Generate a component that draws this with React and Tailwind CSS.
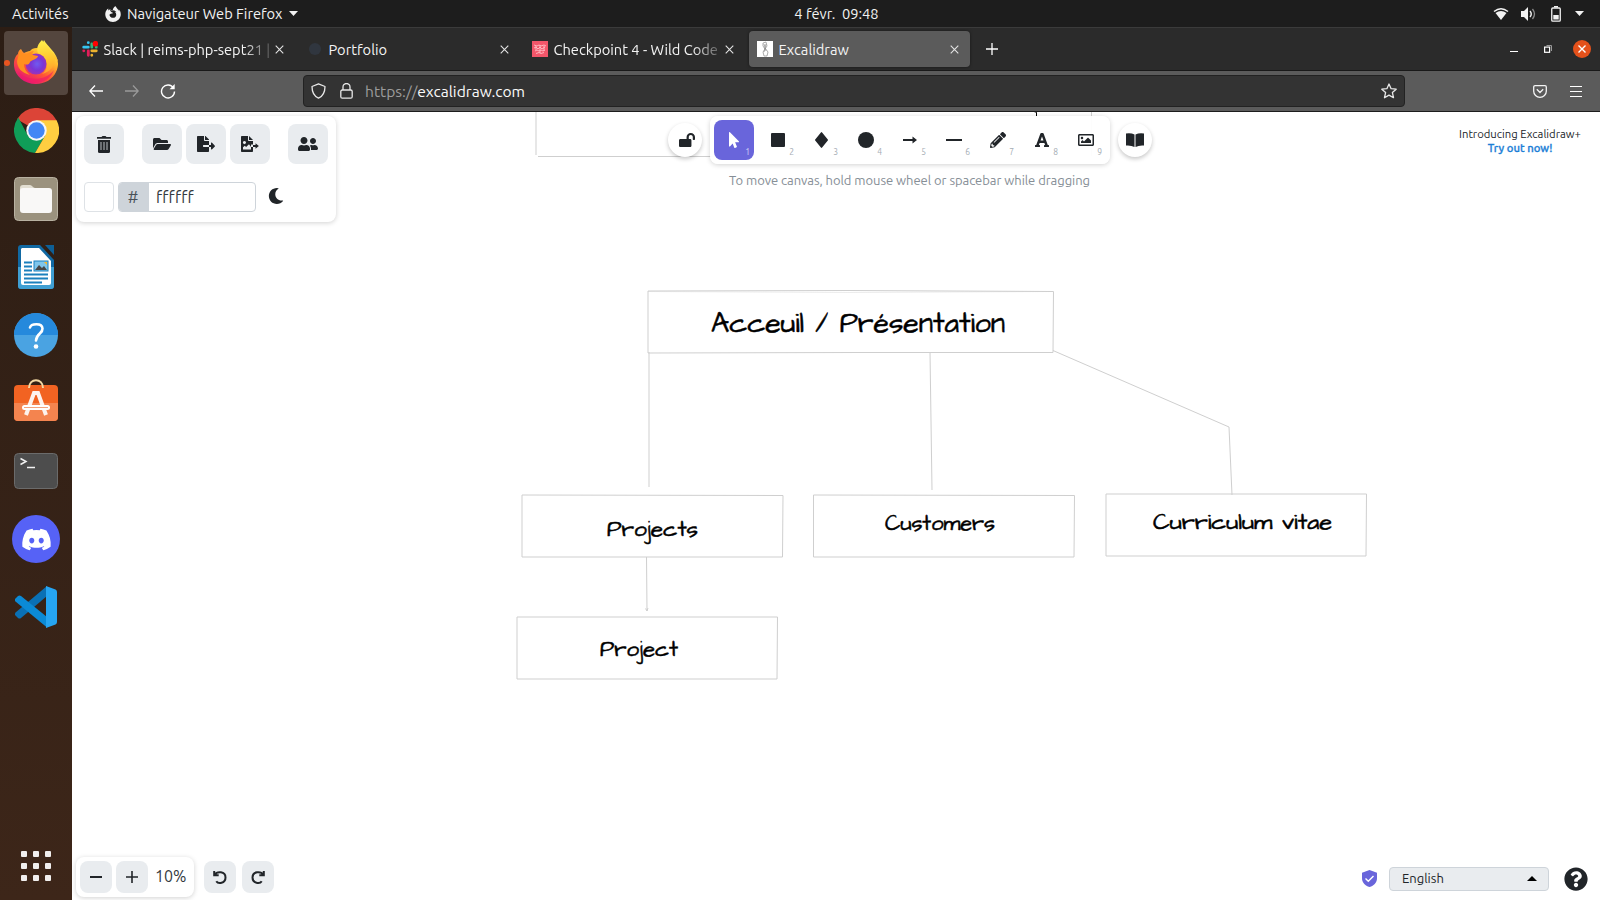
import React from "react";
import { FaFolderOpen, FaFileExport, FaMoon, FaLockOpen, FaMousePointer, FaPencilAlt, FaFont, FaUserFriends, FaDiscord, FaQuestionCircle, FaRegImage } from "react-icons/fa";
import { SiFirefoxbrowser } from "react-icons/si";

const Close = () => (
  <svg className="size-[9px]" viewBox="0 0 9 9" stroke="#e4e4e4" strokeWidth="1.1"><path d="M.7.7l7.6 7.6M8.3.7L.7 8.3" /></svg>
);

const Tab = ({ icon, title, active, fade }) => (
  <div className={`flex h-9 w-[221px] items-center rounded pl-2 pr-[11px] ${active ? "bg-[#5b5b5b] shadow-[0_0_3px_rgba(0,0,0,.5)]" : ""}`}>
    <div className="flex size-4 shrink-0 items-center justify-center">{icon}</div>
    <div className={`ml-[5.500px] h-6 min-w-0 flex-1 whitespace-nowrap text-[14.67px] leading-[25px] text-[#f4f4f4] ${fade ? "[mask-image:linear-gradient(to_right,black_82%,transparent_103%)]" : ""}`}>
      {title}
    </div>
    <div className="ml-0.5"><Close /></div>
  </div>
);

const SlackIcon = () => (
  <svg className="size-4" viewBox="0 0 16 16" strokeWidth="2.8" strokeLinecap="round">
    <path d="M6.3 1.6v.1M1.7 6.2h4.6" stroke="#36c5f0" /><path d="M9.8 3v3.2M14.2 6.2h.1" stroke="#2eb67d" />
    <path d="M9.8 14.2v.1M9.8 9.8h4.5" stroke="#ecb22e" /><path d="M6.3 9.8v4.5M1.7 9.8h.1" stroke="#e01e5a" />
    <circle cx="13.4" cy="2.7" r="2.8" fill="#f00" />
  </svg>
);
const WildIcon = () => (
  <svg className="size-4" viewBox="0 0 16 16"><rect width="16" height="16" fill="#f2566a" />
    <path d="M2 4l3 1 2-1 2 1 3-1 2 1M2 7l2-1 2 2 2-2 2 2 3-2M3 10l2-1 2 1 2-1 2 1 2-1M4 12.500l3-1 2 1 3-1M4 5v4M8 4v8M12 5v5" stroke="#ffc0c6" strokeWidth=".9" fill="none" /></svg>
);
const ExcaliIcon = () => (
  <svg className="size-4" viewBox="0 0 16 16"><rect width="16" height="16" fill="#fff" />
    <path d="M6 2l3-1 1 4-2 3-2-3zM8 8L6 11l1 4 3 0 1-4-3-4M7 3l2 7M9 3l-2 8" stroke="#8a8a8a" strokeWidth=".7" fill="none" /></svg>
);

const FirefoxLogo = () => (
  <svg className="h-[48px] w-[46px]" viewBox="0 0 46 48">
    <defs>
      <linearGradient id="ffA" x1=".85" y1=".1" x2=".3" y2="1"><stop offset="0" stopColor="#fff44f" /><stop offset=".35" stopColor="#ffb42b" /><stop offset=".65" stopColor="#ff5634" /><stop offset="1" stopColor="#e3127a" /></linearGradient>
      <linearGradient id="ffB" x1=".5" y1="0" x2=".6" y2="1"><stop offset="0" stopColor="#fff04a" /><stop offset=".6" stopColor="#ffc22e" /><stop offset="1" stopColor="#ff9a2e" /></linearGradient>
      <radialGradient id="ffC" cx=".55" cy=".5"><stop offset="0" stopColor="#6f5bf0" /><stop offset=".6" stopColor="#7a35d6" /><stop offset="1" stopColor="#9b32b8" /></radialGradient>
    </defs>
    <path d="M8 10c1 2 2 3 3 4 2-1 4-2 6-2 2-3 7-4 10-2l4-9c2 4 4 5 7 9 7 7 9 15 5 23-3 7-11 12-20 12C11 45 2 37 1 27c-.4-5 1-10 4-12 0-2 1-4 3-5z" fill="url(#ffA)" />
    <path d="M29 1c-4 4-6 8-4 13 5 2 9 7 9 12 0 4-2 7-5 9 8-2 13-8 13-15l3 2C43 15 35 11 29 1z" fill="url(#ffB)" />
    <circle cx="23" cy="25" r="10.500" fill="url(#ffC)" />
    <path d="M7 11c1 2 3 4 5 4 3 0 5-3 9-3-2 2-2 3-1 4l5 1c0 3-7 4-8 6-1 3-3 3-6 2 0 4 2 8 6 11C9 34 4 29 4 22z" fill="#ff8f1f" />
    <path d="M5 32c6 9 26 12 36-1-3 8-10 13-19 13C14 44 7 39 5 32z" fill="#f01a68" opacity=".65" />
  </svg>
);
const ChromeLogo = () => (
  <svg className="-mt-px size-[45px]" viewBox="-22.500 -22.500 45 45">
    <path d="M0 0L-19.500-11.250A22.500 22.500 0 0 1 20.200-10z" fill="#dc4437" />
    <path d="M0-10H20.200L8.700 5z" fill="#ffce41" />
    <path d="M-8.700 5l-9.500-18A22.500 22.500 0 0 0-1.500 22.450L8.700 5z" fill="#109d58" />
    <path d="M8.700 5L-1.500 22.450A22.500 22.500 0 0 0 20.200-10H0z" fill="#ffce41" />
    <circle r="10.200" fill="#f5f5f5" /><circle r="8.200" fill="#4286f5" />
  </svg>
);
const FilesLogo = () => (
  <svg className="size-[46px]" viewBox="0 0 46 46"><rect x="1.500" y="1.500" width="43" height="43" rx="4" fill="#9b927e" stroke="#b8b1a1" />
    <path d="M7 12a3 3 0 0 1 3-3h7c2 0 3 3 5 3h14v10H7z" fill="#e2ded2" /><rect x="7" y="12" width="32" height="25" rx="3" fill="#f9f8f7" /></svg>
);
const WriterLogo = () => (
  <svg className="h-[46px] w-[38px]" viewBox="0 0 38 46">
    <path d="M4 1h19l14 15v26a3 3 0 0 1-3 3H4a3 3 0 0 1-3-3V4a3 3 0 0 1 3-3z" fill="#1169a3" /><path d="M1 23h36v19a3 3 0 0 1-3 3H4a3 3 0 0 1-3-3z" fill="#3f9fd3" />
    <path d="M5 4h17l12 13v22a2 2 0 0 1-2 2H6a2 2 0 0 1-2-2V5z" fill="#fff" /><path d="M28 1h9v10z" fill="#0e5f96" />
    <path d="M7 18.500h8M7 22.500h8M7 26.500h8M7 30.500h24M7 34.500h24M7 38.500h18" stroke="#1b80bd" strokeWidth="2" />
    <rect x="17" y="17" width="14" height="10" fill="#7fc6ec" stroke="#1b80bd" /><path d="M18 26l4-5 3 3 2-2 3 4z" fill="#474747" /><path d="M27 18h3v3z" fill="#fbb829" />
  </svg>
);
const HelpLogo = () => (
  <svg className="size-[46px]" viewBox="0 0 46 46"><circle cx="23" cy="23" r="22" fill="#4aa3e2" /><path d="M1 23a22 22 0 0 1 44 0z" fill="#2589dc" />
    <path d="M17 15.500c1-4 12-5 12.500 1 .4 5-6 5-6.500 12" fill="none" stroke="#fff" strokeWidth="2.600" strokeLinecap="round" /><circle cx="23" cy="34.500" r="2.300" fill="#fff" /></svg>
);
const SoftwareLogo = () => (
  <svg className="size-[48px]" viewBox="0 0 48 48">
    <rect x="2" y="6" width="44" height="36" rx="4" fill="#f26322" /><path d="M2 24h44v14a4 4 0 0 1-4 4H6a4 4 0 0 1-4-4z" fill="#f4844f" />
    <path d="M17 9c0-10.500 14-10.500 14 0" fill="none" stroke="#f3d9a4" strokeWidth="2" />
    <path d="M14 36l8-22h4l8 22" fill="none" stroke="#fdf3ee" strokeWidth="4" /><rect x="10" y="26" width="28" height="5" rx="2.500" fill="#fff" /><path d="M12 28.500h24" stroke="#f4a27c" /></svg>
);
const TerminalLogo = () => (
  <svg className="h-9 w-11" viewBox="0 0 44 36"><rect x=".5" y=".5" width="43" height="35" rx="4" fill="#4d4d4d" stroke="#6b6b6b" />
    <path d="M6.500 5.500l5.500 3-5.500 3M13 14.500h8" fill="none" stroke="#f2f2f2" strokeWidth="1.500" /></svg>
);
const CodeLogo = () => (
  <svg className="size-[42px]" viewBox="0 0 42 42"><path d="M0 29l3 3q1.500 1 3 0L32 10V0L.5 26.500Q-.5 27.700 0 29z" fill="#0a70b5" />
    <path d="M0 13l3-3q1.500-1 3 0L32 31v10.500L.5 15.500Q-.5 14.300 0 13z" fill="#0b8ad6" /><path d="M31 0l9.500 3.500Q42 4.200 42 6v30q0 1.800-1.500 2.500L31 42z" fill="#26a5f2" /></svg>
);

const Dock = () => (
  <aside className="flex w-[72px] shrink-0 flex-col items-center bg-gradient-to-b from-[#2c1d14] to-[#3d2619] pt-1">
    <div className="flex flex-col gap-1">
      {[FirefoxLogo, ChromeLogo, FilesLogo, WriterLogo, HelpLogo, SoftwareLogo, TerminalLogo].map((Logo, i) => (
        <div key={i} className={`relative flex size-16 items-center justify-center rounded ${i === 0 ? "bg-[#54463e]" : ""}`}>
          {i === 0 && <span className="absolute left-0 top-[29px] size-1.5 rounded-full bg-[#e95420]" />}
          <Logo />
        </div>
      ))}
      <div className="flex size-16 items-center justify-center"><div className="flex size-12 items-center justify-center rounded-full bg-[#5662f6] text-[31px] text-white"><FaDiscord /></div></div>
      <div className="flex size-16 items-center justify-center"><CodeLogo /></div>
    </div>
    <div className="mt-auto mb-[19px] grid grid-cols-3 gap-1.5">
      {Array.from({ length: 9 }, (_, i) => <span key={i} className="size-1.5 rounded-[1px] bg-[#f1efee]" />)}
    </div>
  </aside>
);

const Btn = ({ children, className = "" }) => (
  <button className={`flex size-10 items-center justify-center rounded-lg bg-[#e9ecef] text-[#212529] ${className}`}>{children}</button>
);

const Trash = () => (
  <svg className="h-[17px] w-[14px]" viewBox="0 0 14 17"><path d="M0 1h4.500L5.500 0h3l1 1H14v1.800H0z" fill="#212529" /><path d="M1 4h12v11.500a1.500 1.500 0 0 1-1.500 1.500h-9A1.500 1.500 0 0 1 1 15.500z" fill="#212529" /><path d="M4 6v8M7 6v8M10 6v8" stroke="#8d9296" strokeWidth="1.400" /></svg>
);
const ImageExport = () => (
  <svg className="h-4 w-[18px]" viewBox="0 0 576 512"><path fill="#212529" fillRule="evenodd" d="M24 0h200v136c0 13 11 24 24 24h136v112H320v80h64v136c0 13-11 24-24 24H24c-13 0-24-11-24-24V24C0 11 11 0 24 0zM110 160a50 50 0 1 0 .1 0zM64 432h256v-80l-64-90-92 92-44-42-56 50zM256 0l128 128H256z" /><path fill="#212529" d="M384 288h80v-56l108 88-108 88v-56h-80z" /></svg>
);

const Tools = () => {
  const tools = [
    <FaMousePointer className="size-4" />,
    <svg className="size-[14px]" viewBox="0 0 14 14"><rect width="14" height="14" rx="1" fill="#212529" /></svg>,
    <svg className="h-4 w-3.5" viewBox="0 0 14 16"><path d="M5.900.5q.6-.8 1.200 0L12.800 7.400q.4.6 0 1.200L7.100 15.500q-.6.8-1.200 0L.2 8.600q-.4-.6 0-1.200z" fill="#212529" /></svg>,
    <span className="size-4 rounded-full bg-[#212529]" />,
    <svg className="h-2 w-[14px]" viewBox="0 0 14 8"><path d="M0 3h9.500V.5L14 4 9.500 7.500V5H0z" fill="#212529" /></svg>,
    <span className="h-0.5 w-4 bg-[#212529]" />,
    <FaPencilAlt className="size-4" />,
    <FaFont className="size-4" />,
    <FaRegImage className="size-4" />,
  ];
  return (
    <div className="flex h-12 gap-1 rounded-lg bg-white/95 p-1 shadow-[0_1px_5px_rgba(0,0,0,.18)]">
      {tools.map((t, i) => (
        <button key={i} className={`relative flex size-10 items-center justify-center rounded-lg ${i === 0 ? "bg-[#6965db] text-white" : "text-[#212529]"}`}>
          {t}
          <span className={`absolute bottom-[3px] right-1 text-[8.500px] leading-[10px] ${i === 0 ? "text-[#d4d3f6]" : "text-[#a3abb3]"}`}>{i + 1}</span>
        </button>
      ))}
    </div>
  );
};

const Round = ({ children }) => <div className="flex size-[34px] items-center justify-center rounded-full bg-white text-[#212529] shadow-[0_2px_4px_rgba(0,0,0,.22)]">{children}</div>;

const labels = [
  { t: "Acceuil / Présentation", x: 711, y: 332, w: 294, s: 28 },
  { t: "Projects", x: 607, y: 536, w: 91, s: 22 },
  { t: "Customers", x: 885, y: 530, w: 110, s: 22 },
  { t: "Curriculum vitae", x: 1153, y: 529, w: 179, s: 22 },
  { t: "Project", x: 600, y: 656, w: 78, s: 22 },
];

const Diagram = () => (
  <svg className="absolute inset-0 h-[788px] w-[1528px]" viewBox="72 112 1528 788" fill="none" stroke="#cfcfcf" strokeWidth="1">
    <path d="M536 112L536 155M538 156.500H720M1091.500 112v44" />
    <path d="M1037 112v4h-1v-3h-2z" fill="#000" stroke="none" />
    <path d="M648 291L850 290.500L1053.500 291.500L1053 352.500L860 352.500L648 353z" />
    <path d="M648 291.500L850 292.500L1053 291.500" strokeOpacity=".4" />
    <path d="M649 352L649 487M930 352L932 490M1053 350.500L1229 427L1232 495M646.500 557L647 611M645.500 608.500L647 611L648 608" />
    <path d="M522 495L783 495.500L782.500 557L522 557zM813.500 495L1074.500 495.500L1074 557L813.500 557zM1106 494L1366.500 494L1366 556L1106 556zM517 617L777.500 617L777 679L517 679z" />
    {labels.map((l) => (
      <text key={l.t} x={l.x} y={l.y} fontSize={l.s} textLength={l.w} lengthAdjust="spacingAndGlyphs" fill="#000" stroke="#000" strokeWidth=".5" className="font-['Virgil','Excalifont','Architects_Daughter','Indie_Flower','Gochi_Hand','Patrick_Hand','Kalam','Comic_Neue',sans-serif]">{l.t}</text>
    ))}
  </svg>
);

export default function App() {
  return (
    <div className="flex h-[900px] w-[1600px] flex-col overflow-hidden bg-white font-['Ubuntu','Noto_Sans',sans-serif]">
      <header className="grid h-[27px] shrink-0 grid-cols-3 items-center bg-[#1d1d1d] text-[14.67px] text-[#f2f2f2]">
        <div className="flex items-center pl-3">
          <span className="w-[93px]">Activités</span>
          <SiFirefoxbrowser className="size-4" />
          <span className="ml-1.5 w-[157px] whitespace-nowrap">Navigateur Web Firefox</span>
          <svg className="ml-[5px] h-[5px] w-[9px]" viewBox="0 0 9 5"><path d="M0 0h9L4.500 5z" fill="#f2f2f2" /></svg>
        </div>
        <div className="whitespace-pre pl-[73px] text-center">4 févr.  09:48</div>
        <div className="flex items-center justify-end gap-3 pr-4">
          <svg className="h-3.5 w-4" viewBox="0 0 16 14"><path d="M1 4.500Q8-1 15 4.500" fill="none" stroke="#f2f2f2" strokeWidth="1.500" /><path d="M2.500 6Q8 2 13.500 6L8 13z" fill="#f2f2f2" /></svg>
          <svg className="h-3.5 w-4" viewBox="0 0 16 14"><path d="M0 4h3l4-4v14l-4-4H0z" fill="#f2f2f2" /><path d="M9 4q2.500 3 0 6" fill="none" stroke="#f2f2f2" strokeWidth="1.400" /><path d="M11.500 2q4 5 0 10" fill="none" stroke="#8a8a8a" strokeWidth="1.300" /></svg>
          <svg className="ml-0.5 h-4 w-2.5" viewBox="0 0 10 16"><path d="M3 0h4v1.500H3z" fill="#f2f2f2" /><rect x=".75" y="2" width="8.500" height="13.200" rx="1" fill="none" stroke="#f2f2f2" strokeWidth="1.300" /><rect x="2.300" y="9" width="5.400" height="4.500" fill="#f2f2f2" /></svg>
          <svg className="ml-0.5 h-[5px] w-[9px]" viewBox="0 0 9 5"><path d="M0 0h9L4.500 5z" fill="#f2f2f2" /></svg>
        </div>
      </header>
      <div className="flex min-h-0 flex-1">
        <Dock />
        <div className="flex min-w-0 flex-1 flex-col">
          <div className="flex h-11 shrink-0 items-center border-b border-t border-b-[#191919] border-t-[#3b3b3b] bg-[#2b2b2b] pl-0.5">
            <div className="flex gap-1">
              <Tab icon={<SlackIcon />} title="Slack | reims-php-sept21 |" fade />
              <Tab icon={<span className="size-3 rounded-full bg-[#30363f]" />} title="Portfolio" />
              <Tab icon={<WildIcon />} title="Checkpoint 4 - Wild Code" fade />
              <Tab icon={<ExcaliIcon />} title="Excalidraw" active />
            </div>
            <svg className="ml-4 size-3" viewBox="0 0 12 12" stroke="#fff" strokeWidth="1.300"><path d="M6 0v12M0 6h12" /></svg>
            <div className="ml-auto flex items-center pr-[9px]">
              <span className="mt-1 h-px w-2 bg-white" />
              <svg className="ml-[26px] size-2" viewBox="0 0 8 8" fill="none"><rect x=".6" y="2.100" width="5" height="5.200" stroke="#fff" strokeWidth="1.200" /><path d="M2.500.5h5V6" stroke="#999" /></svg>
              <span className="ml-[21px] flex size-[18px] items-center justify-center rounded-full bg-[#e4511b]"><svg className="size-2" viewBox="0 0 8 8" stroke="#fff" strokeWidth="1.400"><path d="M.5.5l7 7M7.500.5l-7 7" /></svg></span>
            </div>
          </div>
          <div className="flex h-[41px] shrink-0 items-center border-b border-[#1c1c1c] bg-[#5b5b5b]">
            <div className="flex w-[231px] items-center gap-[22px] pl-[17px]">
              <svg className="size-3.5" viewBox="0 0 14 14" fill="none" stroke="#fff" strokeWidth="1.300"><path d="M14 7H.8M6 1.500L.8 7 6 12.500" /></svg>
              <svg className="size-3.5" viewBox="0 0 14 14" fill="none" stroke="#9a9a9a" strokeWidth="1.300"><path d="M0 7h13.200M8 1.500L13.200 7 8 12.500" /></svg>
              <svg className="-ml-px size-4" viewBox="0 0 16 16" fill="none" stroke="#fff" strokeWidth="1.400"><path d="M13.500 5A6.500 6.500 0 1 0 14.500 8.500" /><path d="M9.500 6.200h5.200V1z" fill="#fff" stroke="none" /></svg>
            </div>
            <div className="flex h-8 w-[1102px] items-center rounded border border-[#222] bg-[#333] pl-[7px] pr-[7px] text-[15.6px]">
              <svg className="h-4 w-[15px]" viewBox="0 0 15 16" fill="none" stroke="#e8e8e8" strokeWidth="1.300"><path d="M7.500.8L14 3.500C14 9 12.500 13 7.500 15.200 2.500 13 1 9 1 3.500z" strokeLinejoin="round" /></svg>
              <svg className="ml-3.5 h-4 w-[13px]" viewBox="0 0 13 16" fill="none" stroke="#e8e8e8" strokeWidth="1.300"><rect x=".8" y="7" width="11.400" height="8.200" rx="1.500" /><path d="M3 7V4a3.500 3.500 0 0 1 7 0v3" /></svg>
              <span className="ml-3 mt-px text-[#fbfbfb]"><span className="text-[#9c9c9c]">https://</span>excalidraw.com</span>
              <svg className="ml-auto size-4" viewBox="0 0 16 16" fill="none" stroke="#e8e8e8" strokeWidth="1.300" strokeLinejoin="round"><path d="M8 1l2.100 4.700 5.100.5-3.800 3.400 1.100 5.100L8 12.100l-4.500 2.600 1.100-5.100L.8 6.200l5.100-.5z" /></svg>
            </div>
            <div className="ml-auto flex items-center gap-[23px] pr-[18px]">
              <svg className="h-[13px] w-3.5" viewBox="0 0 14 13" fill="none" stroke="#f4f4f4" strokeWidth="1.300"><path d="M2 .7h10a1.300 1.300 0 0 1 1.300 1.300v4.300a6.300 6 0 0 1-12.600 0V2A1.300 1.300 0 0 1 2 .7zM3.800 4.300L7 7.500l3.200-3.200" /></svg>
              <svg className="h-[11px] w-3" viewBox="0 0 12 11" stroke="#fff" strokeWidth="1"><path d="M0 .5h12M0 5.500h12M0 10.500h12" /></svg>
            </div>
          </div>
          <main className="relative flex flex-1 flex-col justify-between bg-white">
            <Diagram />
            <div className="relative flex items-start pl-1 pt-1">
              <div className="flex h-[106px] w-[260px] flex-col justify-between rounded-lg bg-white p-2 pb-[10px] shadow-[0_1px_5px_rgba(0,0,0,.18)]">
                <div className="flex">
                  <Btn><Trash /></Btn>
                  <Btn className="ml-[18px]"><FaFolderOpen className="h-4 w-[18px]" /></Btn>
                  <Btn className="ml-1"><FaFileExport className="h-4 w-[18px]" /></Btn>
                  <Btn className="ml-1"><ImageExport /></Btn>
                  <Btn className="ml-[18px]"><FaUserFriends className="size-5" /></Btn>
                </div>
                <div className="flex items-center">
                  <span className="size-[30px] rounded border border-[#dee2e6]" />
                  <div className="ml-1 flex h-[30px] w-[138px] items-center overflow-hidden rounded border border-[#ced4da] text-base text-[#495057]">
                    <span className="flex h-full w-[30px] items-center justify-center bg-[#ced4da] pr-0.5">#</span>
                    <span className="pl-[7px] tracking-[0.2px] text-[#343a40]">ffffff</span>
                  </div>
                  <FaMoon className="mb-0.5 ml-3 size-4 text-[#212529]" />
                </div>
              </div>
              <div className="ml-[332px] flex flex-col">
                <div className="flex items-center gap-2">
                  <Round><FaLockOpen className="ml-[3px] size-4" /></Round>
                  <Tools />
                  <Round><svg className="h-3.5 w-[18px]" viewBox="0 0 18 14" fill="#212529"><path d="M0 .5Q5-.3 8.500 1.500V14Q5 12 0 12.500zM18 .5Q13-.3 9.500 1.500V14Q13 12 18 12.500z" /></svg></Round>
                </div>
                <p className="ml-[61px] mt-1.5 whitespace-nowrap text-[13px] leading-5 tracking-[-0.05px] text-[#868e96]">To move canvas, hold mouse wheel or spacebar while dragging</p>
              </div>
              <div className="ml-auto mt-[11px] w-[160px] text-center text-[11.300px] leading-[14px] text-[#212529]">
                Introducing Excalidraw+<div className="font-medium text-[#1c7ed6] [-webkit-text-stroke:0.3px_#1c7ed6]">Try out now!</div>
              </div>
            </div>
            <div className="relative flex items-center pb-[3px] pl-1">
              <div className="flex h-10 w-[118px] items-center gap-1 rounded-lg bg-white p-1 text-[#343a40] shadow-[0_1px_5px_rgba(0,0,0,.18)]">
                <Btn className="!size-8"><span className="h-[1.500px] w-3 bg-[#212529]" /></Btn>
                <Btn className="!size-8"><svg className="size-3" viewBox="0 0 12 12" stroke="#212529" strokeWidth="1.600"><path d="M6 0v12M0 6h12" /></svg></Btn>
                <span className="mb-0.5 ml-[3px] text-base">10%</span>
              </div>
              <Btn className="!size-8 ml-2.5"><svg className="h-[13px] w-3.5" viewBox="0 0 14 13" fill="none" stroke="#212529" strokeWidth="2"><path d="M1.200 0v4.300h4.500M1.500 4.200C4-.3 12.500.3 12.500 6.500S5 13 3.300 10.200" /></svg></Btn>
              <Btn className="!size-8 ml-1.5"><svg className="h-[13px] w-3.5 -scale-x-100" viewBox="0 0 14 13" fill="none" stroke="#212529" strokeWidth="2"><path d="M1.200 0v4.300h4.500M1.500 4.200C4-.3 12.500.3 12.500 6.500S5 13 3.300 10.200" /></svg></Btn>
              <div className="ml-auto mt-[3px] flex items-center pr-3">
                <svg className="h-[17px] w-[15px]" viewBox="0 0 15 17"><path d="M7.500 0L15 2.800V8c0 4.500-3 7.800-7.500 9C3 15.800 0 12.500 0 8V2.800z" fill="#6965db" /><path d="M3.500 8.500l2.800 2.800L11.500 6" fill="none" stroke="#fff" strokeWidth="1.400" /></svg>
                <div className="ml-3 flex h-6 w-[160px] items-center justify-between rounded border border-[#ced4da] bg-[#e9ecef] pl-3 pr-[11px] text-[13px] text-[#212529]">English
                  <svg className="h-[5px] w-2.5" viewBox="0 0 10 5"><path d="M0 5h10L5 0z" /></svg></div>
                <FaQuestionCircle className="ml-[15px] size-6 text-[#212529]" />
              </div>
            </div>
          </main>
        </div>
      </div>
    </div>
  );
}
